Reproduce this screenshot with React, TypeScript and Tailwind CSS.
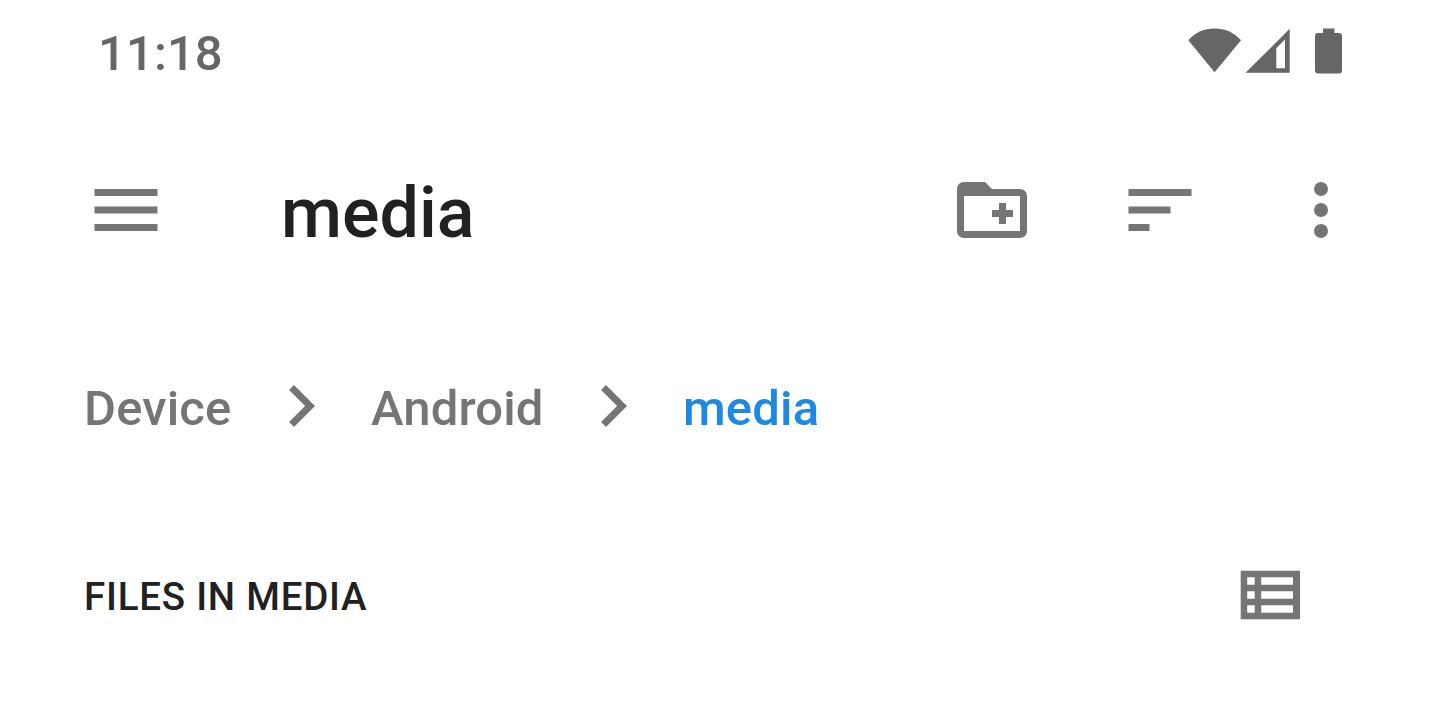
import type { ReactNode } from 'react';

function Icon({ children, className = '' }: { children: ReactNode; className?: string }) {
  return (
    <svg viewBox="0 0 24 24" className={`h-[84px] w-[84px] shrink-0 fill-current ${className}`}>
      {children}
    </svg>
  );
}

function Chevron({ className = '' }: { className?: string }) {
  return (
    <Icon className={className}>
      <path d="M10 6 8.59 7.41 13.17 12l-4.58 4.59L10 18l6-6z" />
    </Icon>
  );
}

function StatusBar() {
  return (
    <div className="flex h-[106px] items-center justify-between pl-[98px] pr-[98px] text-[#666666]">
      <span className="w-[130px] pt-[2px] text-[49px] leading-[104px] tracking-[0.1px]">11:18</span>
      <div className="flex h-[46px] items-start">
        <svg viewBox="0 0 54 46" className="-mt-[2px] h-[46px] w-[54px] fill-current">
          <path d="M.3 12.3C7.5 4.2 16.5.5 26.6.5S45.8 4.2 53 12.3L26.6 44.3z" />
        </svg>
        <svg viewBox="0 0 46 46" className="-mt-[2px] ml-[3px] h-[46px] w-[46px] fill-current">
          <path fillRule="evenodd" d="M.5 44.8 44.7.8V44.8zM31.3 20.3V40.3H40V11.5z" />
        </svg>
        <svg viewBox="0 0 27 46" className="-mt-[2px] ml-[24px] h-[46px] w-[27px] fill-current">
          <path d="M8 .5h11.500V5H24a3 3 0 0 1 3 3v34.500a3 3 0 0 1-3 3H3a3 3 0 0 1-3-3V8a3 3 0 0 1 3-3h5z" />
        </svg>
      </div>
    </div>
  );
}

function Toolbar() {
  return (
    <header className="flex h-[208px] items-center pl-[84px] pr-[77px] text-[#757575]">
      <Icon>
        <path d="M3 18h18v-2H3v2zm0-5h18v-2H3v2zm0-7v2h18V6H3z" />
      </Icon>
      <h1 className="ml-[113px] flex-1 pt-[6px] text-[70px] leading-[84px] text-[#212121]">media</h1>
      <Icon>
        <path d="M20 6h-8l-2-2H4c-1.110 0-1.990.89-1.990 2L2 18c0 1.110.89 2 2 2h16c1.110 0 2-.89 2-2V8c0-1.110-.89-2-2-2zm0 12H4V8h16v10zm-8-4h2v2h2v-2h2v-2h-2v-2h-2v2h-2z" />
      </Icon>
      <Icon className="ml-[84px]">
        <path d="M3 18h6v-2H3v2zM3 6v2h18V6H3zm0 7h12v-2H3v2z" />
      </Icon>
      <Icon className="ml-[77px]">
        <circle cx="12" cy="6" r="2" />
        <circle cx="12" cy="12" r="2" />
        <circle cx="12" cy="18" r="2" />
      </Icon>
    </header>
  );
}

function Breadcrumbs() {
  return (
    <nav className="flex h-[184px] items-center pl-[84px] text-[49px] leading-[84px] tracking-[0.15px] text-[#757575]">
      <span className="w-[147px] pt-[5px]">Device</span>
      <Chevron className="ml-[28px]" />
      <span className="ml-[28px] w-[172px] pt-[5px]">Android</span>
      <Chevron className="ml-[28px]" />
      <span className="ml-[28px] pt-[5px] text-[#1e88e5]">media</span>
    </nav>
  );
}

function SectionHeader() {
  return (
    <div className="flex h-[194px] items-center justify-between pl-[84px] pr-[139px]">
      <h2 className="pt-[4px] text-[38.5px] leading-[60px] tracking-[0.77px] text-[#212121]">FILES IN MEDIA</h2>
      <svg viewBox="0 0 61 50" className="h-[50px] w-[61px] fill-[#757575]">
        <path
          fillRule="evenodd"
          d="M.7.7h59.300v48.500H.7zM7.200 7.300v7.500h7.500V7.300zM21.200 7.300v7.500h31.800V7.300zM7.200 21.300v7.500h7.500v-7.500zM21.200 21.300v7.500h31.800v-7.500zM7.200 35.300v7.500h7.500v-7.500zM21.200 35.300v7.500h31.800v-7.500z"
        />
      </svg>
    </div>
  );
}

export default function App() {
  return (
    <main className="h-[722px] w-[1440px] overflow-hidden whitespace-nowrap bg-white font-['Roboto',sans-serif] [&_h1]:font-medium [&_h2]:font-medium [&_span]:font-medium">
      <StatusBar />
      <Toolbar />
      <Breadcrumbs />
      <SectionHeader />
    </main>
  );
}
